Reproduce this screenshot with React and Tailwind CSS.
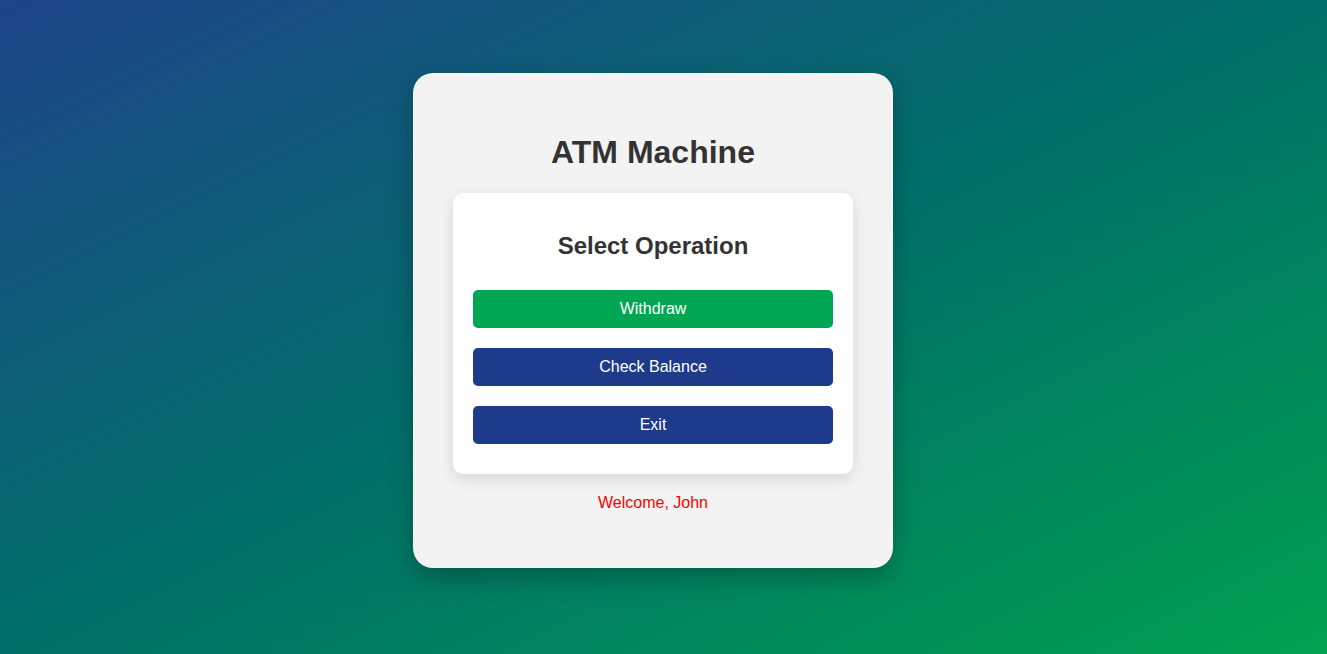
export default function App() {
  return (
    <div
      className="w-full min-h-[654px] bg-[linear-gradient(to_bottom_right,#1e4589,#007068_50%,#00a050)] pt-[73px] pb-[86px]"
      style={{ fontFamily: '"Liberation Sans", Arial, sans-serif' }}
    >
      <div className="ml-[413px] w-[480px] rounded-[20px] bg-[#f3f3f3] px-10 pt-10 pb-10 text-center shadow-[0_10px_25px_rgba(0,0,0,0.25)]">
        <h1 className="my-[21.44px] text-[32px] font-bold leading-[1.15] text-[#333]">ATM Machine</h1>
        <div className="flex flex-col rounded-[10px] bg-white p-5 shadow-[0_5px_15px_rgba(0,0,0,0.12)]">
          <h2 className="mt-[19px] mb-[20.84px] text-[24px] font-bold leading-[1.15] text-[#333]">Select Operation</h2>
          <button className="my-[10px] h-[38px] w-full rounded-[5px] bg-[#00a651] text-[16px] leading-[1.15] text-white">
            Withdraw
          </button>
          <button className="my-[10px] h-[38px] w-full rounded-[5px] bg-[#1e3a8a] text-[16px] leading-[1.15] text-white">
            Check Balance
          </button>
          <button className="my-[10px] h-[38px] w-full rounded-[5px] bg-[#1e3a8a] text-[16px] leading-[1.15] text-white">
            Exit
          </button>
        </div>
        <p className="mt-[20px] mb-[16px] text-[16px] leading-[1.15] text-[#ff0000]">Welcome, John</p>
      </div>
    </div>
  );
}
